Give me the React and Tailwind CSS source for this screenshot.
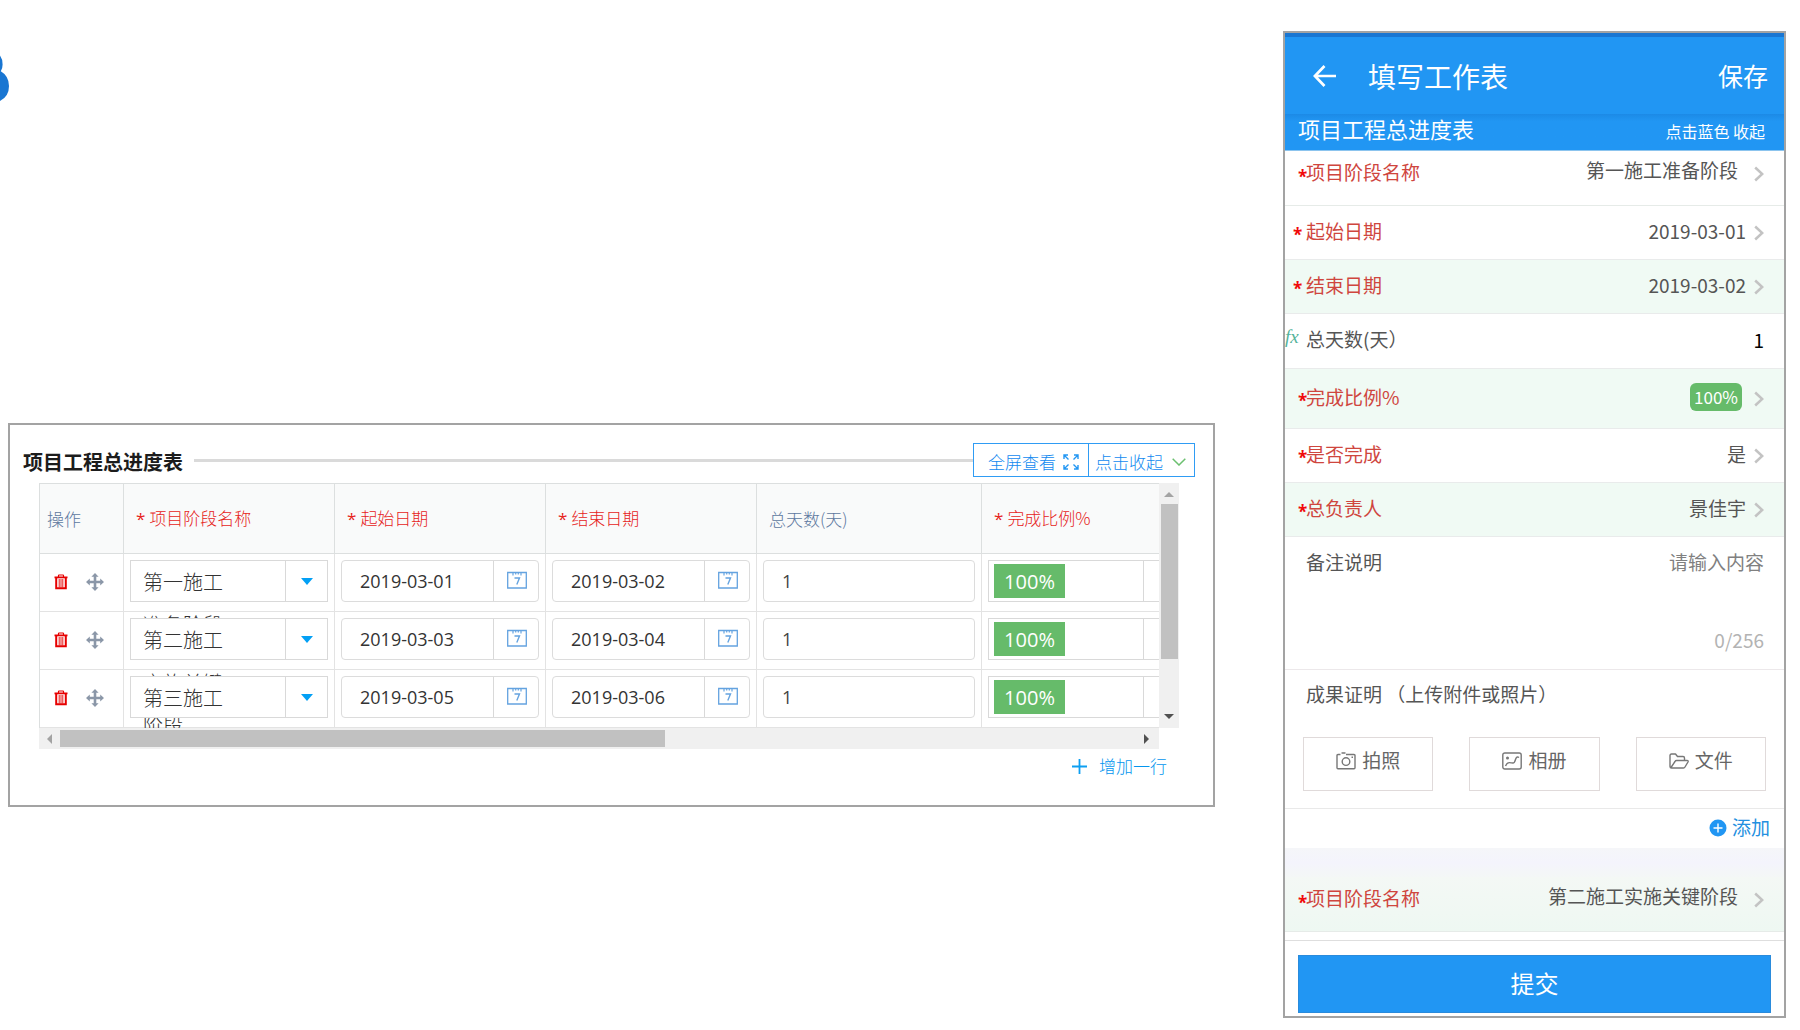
import React, { useState } from 'react';

const STAGES = [
  { id: 1, name: '第一施工', rest: ['准备阶段'], start: '2019-03-01', end: '2019-03-02', days: '1' },
  { id: 2, name: '第二施工', rest: ['实施关键', '阶段'], start: '2019-03-03', end: '2019-03-04', days: '1' },
  { id: 3, name: '第三施工', rest: [], start: '2019-03-05', end: '2019-03-06', days: '1' },
];

function TrashIcon() {
  return (
    <svg width="14" height="16" viewBox="0 0 14 16" fill="none" stroke="#e60000">
      <path d="M4.5 3V1.5Q4.5 1 5 1h4q.5 0 .5.5V3" strokeWidth="1.2" />
      <path d="M0.5 3.4h13" strokeWidth="1.8" />
      <path d="M2.2 4v10.2h9.6V4" strokeWidth="2" />
      <path d="M5.2 5v8.5M7 5v8.5M8.8 5v8.5" strokeWidth="0.9" />
    </svg>
  );
}

function MoveIcon() {
  return (
    <svg width="18" height="18" viewBox="0 0 18 18" fill="#8b97a8">
      <path d="M9 0l3.6 3.8H10.3V7.7h3.9V5.400L18 9l-3.800 3.600V10.300h-3.900v3.900h2.300L9 18l-3.600-3.800H7.700v-3.900H3.800v2.300L0 9l3.800-3.600v2.300h3.900V3.800H5.400z" />
    </svg>
  );
}

function CalendarIcon() {
  return (
    <svg width="20" height="18" viewBox="0 0 20 18" fill="none" stroke="#64a3e0">
      <path d="M0.700 1.500h18.600v15.500H0.700z" strokeWidth="1.300" />
      <path d="M6 1.500v3M8.700 1.500v2M11.300 1.500v2M14 1.500v3" strokeWidth="1.200" />
      <path d="M7.500 7h5l-2.700 6.500" strokeWidth="1.400" />
    </svg>
  );
}

function Chevron() {
  return (
    <svg width="10" height="16" viewBox="0 0 10 16" fill="none" stroke="#c3c3c3" strokeWidth="2.500" className="shrink-0">
      <path d="M1.200 1.500L8.200 8l-7 6.500" />
    </svg>
  );
}

// Drop-down box used in the table cells
function DropBox({ children }) {
  return (
    <div className="relative flex h-[42px] border border-[#d9d9d9] bg-white">
      {children}
      <span className="flex w-[42px] items-center justify-center border-l border-[#d9d9d9]">
        <svg width="12" height="7" viewBox="0 0 12 7" fill="#03a0f5">
          <path d="M0 0h12L6 7z" />
        </svg>
      </span>
    </div>
  );
}

function DateBox({ label, value }) {
  return (
    <div className="relative flex h-[42px] rounded-sm border border-[#dcdcdc] bg-white">
      <input
        type="text"
        aria-label={label}
        defaultValue={value}
        className="w-0 flex-1 bg-transparent pl-[18px] font-['Open_Sans',sans-serif] text-[18px] text-[#333] outline-none"
      />
      <button type="button" aria-label="选择日期" className="flex w-[45px] items-center justify-center border-l border-[#d9d9d9] pb-[2px] pl-[2px]">
        <CalendarIcon />
      </button>
    </div>
  );
}

function HeadCell({ required, children }) {
  return (
    <th
      scope="col"
      className={`h-[71px] border-y border-r border-[#dcdfdf] p-0 pl-[12px] text-left font-light ${
        required ? 'text-[#e6231a]' : 'text-[#5d789f]'
      }`}
    >
      {required && <span className="mr-[4px] font-['Open_Sans',sans-serif] font-normal">*</span>}
      {children}
    </th>
  );
}

function ProgressPanel() {
  const cell = 'border-b border-r border-[#e3e3e3] px-[6px] pt-[6px] pb-[9px] align-top';

  return (
    <section className="border-2 border-[#a3a3a3] bg-white pt-[18px] pb-[21px]">
      {/* Title bar */}
      <div className="flex h-[34px] items-center pl-[13px] pr-[18px]">
        <h2 className="pt-1 text-[20px] leading-[30px] font-bold text-[#1c1c1c]">项目工程总进度表</h2>
        <span className="ml-[11px] h-[3px] flex-1 bg-[#dadada]" />
        <div className="flex h-[34px] border border-[#2f9cf4] text-[17px] font-light text-[#128af0]">
          <button type="button" className="flex w-[115px] items-center gap-[7px] border-r border-[#2f9cf4] pl-[14px] pt-1">
            全屏查看
            <svg width="16" height="16" viewBox="0 0 16 16" fill="none" stroke="#2196f3" strokeWidth="1.400">
              <path d="M1 5V1h4M1 1l4.500 4.500M11 1h4v4M15 1l-4.500 4.500M1 11v4h4M1 15l4.500-4.500M15 11v4h-4M15 15l-4.500-4.500" />
            </svg>
          </button>
          <button type="button" className="flex w-[105px] items-center gap-[9px] pl-[6px] pt-1">
            点击收起
            <svg width="14" height="8" viewBox="0 0 14 8" fill="none" stroke="#6cc070" strokeWidth="1.500">
              <path d="M0.700 0.700L7 7l6.300-6.300" />
            </svg>
          </button>
        </div>
      </div>

      {/* Scrolling table */}
      <div className="mt-[6px] mr-[34px] ml-[29px] grid grid-cols-[1fr_20px]">
        <div className="h-[245px] overflow-hidden">
          <table className="w-[1153px] table-fixed border-separate border-spacing-0 border-l border-[#dcdfdf] text-[17px]">
            <colgroup>
              <col className="w-[84px]" />
              <col className="w-[211px]" />
              <col className="w-[211px]" />
              <col className="w-[211px]" />
              <col className="w-[225px]" />
              <col className="w-[211px]" />
            </colgroup>
            <thead className="bg-[#f9fafa]">
              <tr>
                <th scope="col" className="border-y border-r border-[#dcdfdf] p-0 pl-[7px] text-left font-light text-[#5d789f]">
                  操作
                </th>
                <HeadCell required>项目阶段名称</HeadCell>
                <HeadCell required>起始日期</HeadCell>
                <HeadCell required>结束日期</HeadCell>
                <HeadCell>总天数(天)</HeadCell>
                <HeadCell required>完成比例%</HeadCell>
              </tr>
            </thead>
            <tbody>
              {STAGES.map((row) => (
                <tr key={row.id}>
                  <td className={cell}>
                    <div className="flex h-[42px] items-center gap-[18px] pl-[8px] pt-[2px]">
                      <button type="button" aria-label="删除"><TrashIcon /></button>
                      <button type="button" aria-label="移动"><MoveIcon /></button>
                    </div>
                  </td>
                  <td className={cell}>
                    <DropBox>
                      <select
                        aria-label="项目阶段名称"
                        className="w-0 flex-1 appearance-none bg-transparent pl-[12px] pt-[2px] text-[20px] font-light text-[#333] outline-none"
                      >
                        <option>{row.name}</option>
                      </select>
                      {/* long names run on below the box */}
                      {row.rest.length > 0 && (
                        <span className="absolute top-[43px] left-[12px] text-[20px] leading-[42px] font-light text-[#333]">
                          {row.rest.map((line) => (
                            <span key={line} className="block">{line}</span>
                          ))}
                        </span>
                      )}
                    </DropBox>
                  </td>
                  <td className={cell}><DateBox label="起始日期" value={row.start} /></td>
                  <td className={cell}><DateBox label="结束日期" value={row.end} /></td>
                  <td className={cell}>
                    <input
                      type="text"
                      aria-label="总天数"
                      defaultValue={row.days}
                      className="relative block h-[42px] w-full rounded-sm border border-[#dcdcdc] bg-white pl-[18px] font-['Open_Sans',sans-serif] text-[18px] text-[#444] outline-none"
                    />
                  </td>
                  <td className={cell}>
                    <DropBox>
                      <button type="button" className="flex flex-1 items-center pl-[5px]">
                        <span className="flex h-[34px] w-[71px] items-center justify-center bg-[#66bb6a] pt-[2px] font-['Open_Sans',sans-serif] text-[20px] font-medium text-white">
                          100%
                        </span>
                      </button>
                    </DropBox>
                  </td>
                </tr>
              ))}
            </tbody>
          </table>
        </div>

        {/* Vertical scroll bar */}
        <div className="flex flex-col items-center bg-[#f0f0f0]">
          <svg width="10" height="21" viewBox="0 0 10 21" fill="#a3a3a3"><path d="M0 14h10L5 9z" /></svg>
          <span className="h-[155px] w-[17px] bg-[#c1c1c1]" />
          <svg width="10" height="22" viewBox="0 0 10 22" fill="#505050" className="mt-auto"><path d="M0 8h10L5 13z" /></svg>
        </div>

        {/* Horizontal scroll bar */}
        <div className="flex h-[21px] items-center bg-[#f0f0f0]">
          <svg width="21" height="10" viewBox="0 0 21 10" fill="#a3a3a3"><path d="M13 0v10L8 5z" /></svg>
          <span className="h-[17px] w-[54%] bg-[#c1c1c1]" />
          <svg width="21" height="10" viewBox="0 0 21 10" fill="#505050" className="ml-auto"><path d="M6 0v10l5-5z" /></svg>
        </div>
      </div>

      {/* Add a row */}
      <div className="flex h-[35px] justify-end pr-[46px]">
        <button type="button" className="flex items-center gap-[12px] pb-[2px] text-[17px] font-light text-[#0495ee]">
          <svg width="15" height="15" viewBox="0 0 15 15" stroke="#0d9ff2" strokeWidth="1.800" className="mt-[2px]">
            <path d="M7.500 0v15M0 7.500h15" />
          </svg>
          增加一行
        </button>
      </div>
    </section>
  );
}

function Mark({ tight }) {
  return (
    <span
      className={`block w-[21px] shrink-0 pt-[5px] font-['Open_Sans',sans-serif] text-[17px] leading-[18px] font-bold text-[#f00a0a] ${
        tight ? 'pl-[13px]' : 'pl-[8px]'
      }`}
    >
      *
    </span>
  );
}

// One line of the mobile form
function FormRow({ id, label, tight, tall, tinted, children }) {
  return (
    <div
      className={`flex items-center border-b border-[#e9ebeb] pr-5 ${tall ? 'h-[60px]' : 'h-[54px]'} ${
        tinted ? 'bg-[#f0faf4]' : 'bg-white'
      }`}
    >
      <Mark tight={tight} />
      <label htmlFor={id} className="pb-[2px] text-[19px] text-[#cf463e]">{label}</label>
      {children}
    </div>
  );
}

function StageRow({ id, value, tinted }) {
  return (
    <div
      className={`flex h-[55px] items-center border-b border-[#e6ebe8] pr-5 pb-[8px] ${
        tinted ? 'bg-linear-to-b from-[#f4f8f5] to-[#eef8f2]' : 'bg-white'
      }`}
    >
      <Mark tight />
      <label htmlFor={id} className="pb-[3px] text-[19px] text-[#cf463e]">项目阶段名称</label>
      <select
        id={id}
        className="mr-4 ml-4 w-0 flex-1 appearance-none bg-transparent pb-[7px] text-right text-[19px] text-[#555] outline-none"
      >
        <option>{value}</option>
      </select>
      <Chevron />
    </div>
  );
}

const valueClass =
  'mr-2 ml-4 w-0 flex-1 appearance-none bg-transparent pb-[2px] text-right text-[19px] text-[#555] outline-none';

function UploadButton({ icon, text }) {
  return (
    <button
      type="button"
      className="flex h-[54px] flex-1 items-center justify-center gap-[6px] border border-[#e0dada] bg-white pb-[7px] text-[19px] text-[#666]"
    >
      {icon}
      {text}
    </button>
  );
}

function PhoneForm() {
  const [remark, setRemark] = useState('');

  return (
    <form
      onSubmit={(e) => e.preventDefault()}
      className="mt-[31px] mr-[14px] mb-[11px] w-[503px] shrink-0 border-2 border-[#a3a3a3] bg-white"
    >
      {/* App bar */}
      <div className="h-[4px] bg-[#1976d2]" />
      <header className="flex h-[77px] items-center bg-[#2196f3] pr-[16px] pl-[28px] text-white">
        <button type="button" aria-label="返回">
          <svg width="23" height="22" viewBox="0 0 23 22" fill="none" stroke="white" strokeWidth="2.700">
            <path d="M11.500 1L1.900 11l9.600 10M1.900 11H23" />
          </svg>
        </button>
        <h1 className="ml-[32px] text-[28px] leading-[40px]">填写工作表</h1>
        <button type="button" className="ml-auto text-[25px]">保存</button>
      </header>
      <div className="flex h-[37px] items-center justify-between border-b border-[#8cc4ee] bg-linear-to-b from-[#1c8ae6] to-[#2196f3] to-20% pr-[19px] pl-[13px] text-white">
        <h2 className="pb-[8px] text-[22px] leading-[28px]">项目工程总进度表</h2>
        <span className="pb-[2px] text-[16px]">点击蓝色 收起</span>
      </div>

      {/* Fields */}
      <StageRow id="stage1" value="第一施工准备阶段" />
      <FormRow id="start" label="起始日期">
        <input id="start" type="text" defaultValue="2019-03-01" className={valueClass} />
        <Chevron />
      </FormRow>
      <FormRow id="end" label="结束日期" tinted>
        <input id="end" type="text" defaultValue="2019-03-02" className={valueClass} />
        <Chevron />
      </FormRow>
      <div className="flex h-[55px] items-center border-b border-[#e9ebeb] pr-5">
        <span className="w-[21px] shrink-0 pb-2 font-['Liberation_Serif',serif] text-[19px] text-[#55b39a] italic">fx</span>
        <label htmlFor="days" className="pb-[3px] text-[19px] text-[#555]">总天数(天）</label>
        <input
          id="days"
          type="text"
          defaultValue="1"
          className="w-0 flex-1 bg-transparent pb-[2px] text-right text-[19px] text-black outline-none"
        />
      </div>
      <FormRow id="ratio" label="完成比例%" tight tall tinted>
        <button id="ratio" type="button" className="mr-[12px] mb-[4px] ml-auto h-[28px] w-[52px] rounded-md bg-[#66bb6a] text-[17px] leading-[28px] text-white">
          100%
        </button>
        <Chevron />
      </FormRow>
      <FormRow id="done" label="是否完成" tight>
        <select id="done" className={valueClass}>
          <option>是</option>
          <option>否</option>
        </select>
        <Chevron />
      </FormRow>
      <FormRow id="owner" label="总负责人" tight tinted>
        <select id="owner" className={valueClass}>
          <option>景佳宇</option>
        </select>
        <Chevron />
      </FormRow>

      {/* Remark */}
      <div className="flex h-[133px] flex-col border-b border-[#ece8ea] pt-[10px] pr-5 pl-[21px] text-[19px]">
        <div className="flex">
          <label htmlFor="remark" className="leading-[30px] text-[#555]">备注说明</label>
          <textarea
            id="remark"
            maxLength={256}
            value={remark}
            onChange={(e) => setRemark(e.target.value)}
            placeholder="请输入内容"
            className="h-[78px] w-0 flex-1 resize-none text-right leading-[30px] text-[#555] outline-none placeholder:text-[#808080]"
          />
        </div>
        <span className="text-right leading-[30px] text-[#b3b3b3]">{remark.length}/256</span>
      </div>

      {/* Attachments */}
      <div className="h-[139px] border-b border-[#e9e9e9] px-[18px] pt-[9px]">
        <p className="pl-[3px] text-[19px] leading-[30px] text-[#555]">成果证明 （上传附件或照片）</p>
        <div className="mt-[28px] flex gap-[36px]">
          <UploadButton
            text="拍照"
            icon={
              <svg width="20" height="18" viewBox="0 0 20 18" fill="none" stroke="#777" strokeWidth="1.400">
                <path d="M4.500 2.500H2Q1 2.500 1 3.500v12.300q0 1 1 1h16q1 0 1-1V3.500q0-1-1-1H10M5.500 1h4" />
                <circle cx="10" cy="9.600" r="3.800" />
                <path d="M15.500 5.200h1.500" />
              </svg>
            }
          />
          <UploadButton
            text="相册"
            icon={
              <svg width="20" height="18" viewBox="0 0 20 18" fill="none" stroke="#777" strokeWidth="1.400">
                <rect x="0.800" y="1" width="18.400" height="16" rx="2" />
                <path d="M3.500 14Q5 10.500 7.300 10.600T11 11T13.500 7.500T17 5.500" />
                <circle cx="5.500" cy="6" r="0.800" fill="#777" />
              </svg>
            }
          />
          <UploadButton
            text="文件"
            icon={
              <svg width="20" height="16" viewBox="0 0 20 16" fill="none" stroke="#777" strokeWidth="1.400" strokeLinejoin="round">
                <path d="M15.500 7V5q0-1.500-1.500-1.500H8.500L6.500 1H2.500Q1 1 1 2.500v11Q1 15 2.500 15H14.500q1 0 1.500-1l3-5q.6-1.500-1-1.500H7.500q-1 0-1.500 1L2 14.500" />
              </svg>
            }
          />
        </div>
      </div>
      <div className="flex h-[39px] items-center justify-end pr-[14px]">
        <button type="button" className="flex items-center gap-[5px] pb-[2px] text-[19px] text-[#2490e0]">
          <svg width="18" height="18" viewBox="0 0 18 18">
            <circle cx="9" cy="9" r="8.500" fill="#2196f3" />
            <path d="M9 4.500v9M4.500 9h9" stroke="white" strokeWidth="1.400" />
          </svg>
          添加
        </button>
      </div>
      <div className="h-[29px] bg-linear-to-b from-[#f5f6f9] via-[#f4f4fc] to-[#f4f7f6]" />
      <StageRow id="stage2" value="第二施工实施关键阶段" tinted />

      {/* Submit */}
      <div className="mt-[8px] border-t border-[#dedede] px-[13px] pt-[14px] pb-[3px]">
        <button type="submit" className="block h-[58px] w-full border border-[#2a8bdc] bg-[#2196f3] pb-[2px] text-[24px] text-white">
          提交
        </button>
      </div>
    </form>
  );
}

export default function App() {
  return (
    <main className="flex min-h-screen items-start gap-[68px] bg-white pl-2 font-['Noto_Sans_CJK_SC',sans-serif]">
      <div className="min-w-0 flex-1">
        {/* Brand mark running off the left edge */}
        <div className="-ml-2 h-[423px] pt-[54px]">
          <svg width="10" height="48" viewBox="0 0 10 48" fill="#1976d2">
            <path d="M0 1.500Q2.600 5 2.600 10.500Q2.600 14.500 0.800 17.200Q9 22 9 32Q9 42.500 0 47z" />
          </svg>
        </div>
        <ProgressPanel />
      </div>
      <PhoneForm />
    </main>
  );
}
